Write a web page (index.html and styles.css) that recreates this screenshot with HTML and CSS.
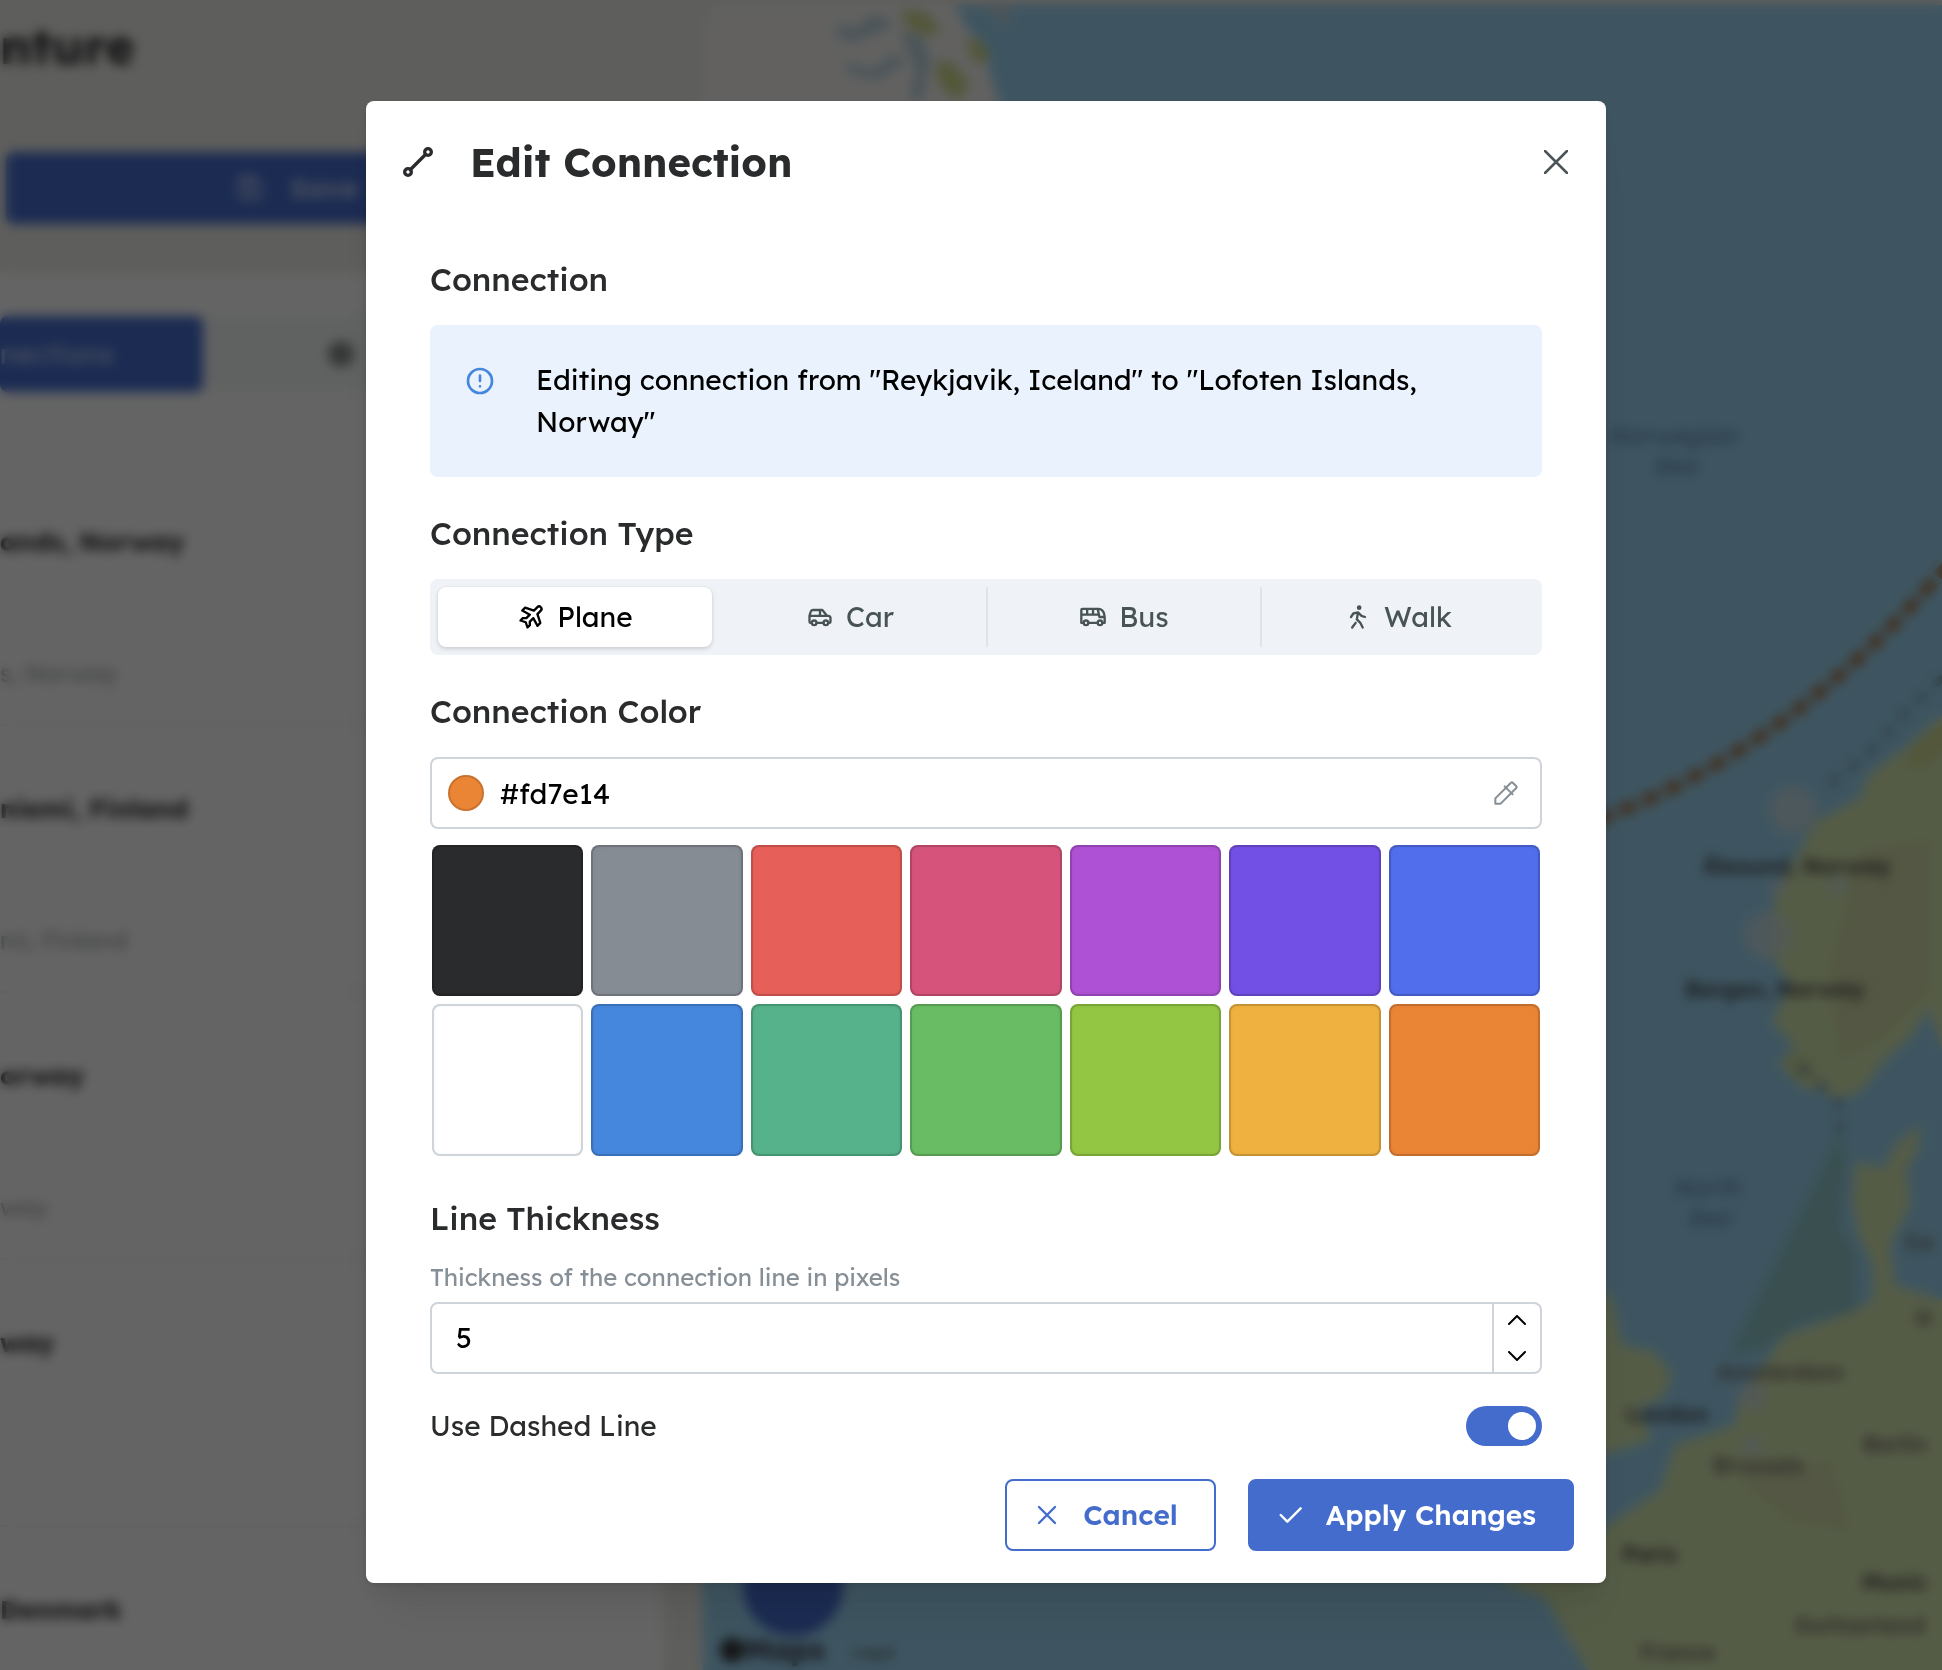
FILE: index.html
```html
<!DOCTYPE html>
<html lang="en">
<head>
<meta charset="utf-8">
<meta name="viewport" content="width=device-width, initial-scale=1">
<title>Edit Connection</title>
<link rel="stylesheet" href="styles.css">
</head>
<body>
<div class="app" aria-hidden="true">
  <div class="sidebar">
    <div class="trip-head">
      <div class="trip-title">nture</div>
      <div class="save-bar">
        <svg class="icon-32" viewBox="0 0 24 24"><path d="M6 4h10l4 4v10a2 2 0 0 1-2 2H6a2 2 0 0 1-2-2V6a2 2 0 0 1 2-2M14 4v4H8V4"/><circle cx="12" cy="14" r="2"/></svg>
        <span>Save</span>
      </div>
    </div>
    <div class="panel">
      <div class="tabs">
        <div class="tab tab-on">nections</div>
        <div class="tab"><span class="gear"></span></div>
      </div>
      <div class="stops">
        <div class="stop"><b>ands, Norway</b><span>s, Norway</span></div>
        <div class="stop"><b>niemi, Finland</b><span>mi, Finland</span></div>
        <div class="stop"><b>orway</b><span>way</span></div>
        <div class="stop"><b>way</b><span></span></div>
        <div class="stop"><b>Denmark</b></div>
      </div>
    </div>
  </div>
  <div class="map">
    <svg class="map-art" viewBox="703 5 1239 1665" preserveAspectRatio="xMinYMin slice">
      <defs>
        <pattern id="reserve" width="6" height="6" patternUnits="userSpaceOnUse"><rect width="6" height="6" fill="#92c2d2"/><circle cx="3" cy="3" r="1.5" fill="#7fd6a0"/></pattern>
      </defs>
      <rect x="703" y="5" width="1239" height="1665" fill="#9bd5f2"/>
      <path fill="#f4f3f1" d="M703 5H955L968 30L985 45L990 75L1002 110L900 130H703Z"/>
      <path fill="#b9d3de" d="M838 22L852 30L875 14L895 24L880 32L850 42L836 36ZM900 32L922 36L930 60L922 100H910L916 70ZM845 62L872 70L895 54L905 62L878 80L850 74ZM950 5L985 8L1010 30V5Z"/>
      <path fill="#cfd98c" d="M900 10L925 12L942 30L928 36L908 28ZM965 40L982 40L990 60L976 64ZM935 62L952 62L970 85L958 100L940 86Z"/>
      <g fill="#d4e6af">
        <path d="M1942 715L1905 748L1868 775L1860 798L1815 822L1800 850L1775 895L1768 950L1790 985L1772 1022L1796 1048L1778 1062L1800 1086L1838 1098L1860 1092L1885 1060L1912 1036L1928 1008L1942 1050Z"/>
        <path d="M1920 1125L1895 1145L1884 1168L1855 1162L1852 1200L1858 1235L1872 1262L1873 1300L1835 1318L1785 1335L1765 1362L1738 1400L1735 1425L1675 1445L1660 1490L1600 1530L1500 1583L1545 1598L1565 1632L1588 1670H1942V1300L1895 1285L1890 1245L1910 1205L1907 1168L1918 1150Z"/>
        <path d="M1590 1275L1612 1300L1622 1345L1655 1352L1672 1375L1662 1398L1638 1408L1652 1440L1590 1458Z"/>
      </g>
      <g fill="#cfd892"><path d="M1942 725L1915 742L1905 765L1925 768L1942 750ZM1785 1055L1810 1060L1815 1080L1795 1080Z"/></g>
      <path fill="#c9cba0" opacity=".5" d="M1860 850L1930 840V990L1880 1040L1840 1060L1830 970ZM1740 1480L1830 1460L1850 1530L1790 1520Z"/>
      <path fill="url(#reserve)" d="M1840 1132L1846 1160L1840 1225L1856 1256V1312L1800 1322L1765 1348L1728 1357Z"/>
      <g fill="#ccdde0" opacity=".75"><circle cx="1793" cy="810" r="24"/><circle cx="1768" cy="935" r="24"/><circle cx="1778" cy="888" r="9"/><circle cx="1838" cy="886" r="9"/><circle cx="1752" cy="1396" r="14"/><circle cx="1752" cy="1446" r="10"/></g>
      <path class="route" d="M1596 820Q1790 752 1950 562"/>
      <path class="track" d="M1832 782L1872 750L1906 712L1942 678M1840 1130V1105L1795 1060"/>
      <g class="sea-name"><text x="1608" y="444">Norwegian</text><text x="1652" y="474">Sea</text><text x="1672" y="1196">North</text><text x="1686" y="1226">Sea</text></g>
      <g class="place"><text x="1703" y="874">Ålesund, Norway</text><text x="1685" y="997">Bergen, Norway</text><text x="1626" y="1422">London</text><text x="1622" y="1562">Paris</text><text x="1862" y="1590">Munic</text></g>
      <g class="place faint"><text x="1717" y="1380">Amsterdam</text><text x="1713" y="1473">Brussels</text><text x="1863" y="1452">Berlin</text><text x="1795" y="1633">Switzerland</text><text x="1640" y="1660">France</text><text x="1905" y="1250">Co</text><text x="1915" y="1326">H</text></g>
      <circle cx="793" cy="1586" r="50" fill="#446ccd"/>
      <circle cx="732" cy="1650" r="12" fill="#333"/>
      <text x="744" y="1660" class="brand">Maps</text>
      <text x="852" y="1658" class="legal">Legal</text>
    </svg>
  </div>
</div>

<div class="overlay">
  <form class="modal" role="dialog" aria-modal="true" aria-labelledby="dialog-title">
    <header class="modal-head">
      <svg class="icon-40" viewBox="0 0 24 24"><circle cx="6" cy="18" r="2"/><circle cx="18" cy="6" r="2"/><path d="M7.500 16.500l9-9"/></svg>
      <h1 class="modal-title" id="dialog-title">Edit Connection</h1>
      <button class="close" type="button" aria-label="Close"><svg class="icon-24" viewBox="0 0 24 24"><path d="M1 1l22 22M23 1L1 23"/></svg></button>
    </header>

    <div class="modal-body">
      <section>
        <h2 class="label">Connection</h2>
        <div class="alert">
          <svg class="icon-32" viewBox="0 0 24 24"><circle cx="12" cy="12" r="9"/><path d="M12 8v4M12 16h.01"/></svg>
          <p>Editing connection from "Reykjavik, Iceland" to "Lofoten Islands, Norway"</p>
        </div>
      </section>

      <fieldset class="field">
        <legend class="label">Connection Type</legend>
        <div class="segments">
          <label class="segment"><input type="radio" name="type" checked>
            <svg class="icon-28" viewBox="0 0 24 24"><path d="M14.500 6.500l3-2.900a2.050 2.050 0 0 1 2.900 2.900l-2.900 3l2.500 7.500l-2.500 2.550l-3.500-6.550l-3 3v3l-2 2l-1.500-4.500l-4.500-1.500l2-2h3l3-3l-6.500-3.500l2.500-2.500z"/></svg>Plane</label>
          <label class="segment"><input type="radio" name="type">
            <svg class="icon-28" viewBox="0 0 24 24"><circle cx="7" cy="17" r="2"/><circle cx="17" cy="17" r="2"/><path d="M5 17H4a1 1 0 0 1-1-1v-5l1-3.500A2 2 0 0 1 6 6h8l4 5h1a2 2 0 0 1 2 2v3a1 1 0 0 1-1 1h-1M15 17H9M3 11h15M12 11V6"/></svg>Car</label>
          <label class="segment"><input type="radio" name="type">
            <svg class="icon-28" viewBox="0 0 24 24"><circle cx="6" cy="17" r="2"/><circle cx="18" cy="17" r="2"/><path d="M4 17H2V6a1 1 0 0 1 1-1h14a5 7 0 0 1 5 7v5h-2M16 17H8M16 5l1.500 7H22M2 10h15M7 5v5M12 5v5"/></svg>Bus</label>
          <label class="segment"><input type="radio" name="type">
            <svg class="icon-28" viewBox="0 0 24 24"><circle cx="13" cy="4" r="1"/><path d="M7 21l3-4M16 21l-2-4l-3-3l1-6M6 12l2-3l4-1l3 3l3 1"/></svg>Walk</label>
        </div>
      </fieldset>

      <section>
        <label class="label" for="color">Connection Color</label>
        <div class="input-box">
          <span class="color-dot"></span>
          <input id="color" class="text-input" type="text" value="#fd7e14">
          <button class="picker" type="button" aria-label="Pick a color"><svg class="icon-32" viewBox="0 0 24 24"><path d="M11 7l6 6M4 16L15.700 4.300a1 1 0 0 1 1.400 0l2.600 2.600a1 1 0 0 1 0 1.400L8 20H4z"/></svg></button>
        </div>
        <div class="swatches">
          <button type="button" class="swatch c-dark" aria-label="Dark"></button>
          <button type="button" class="swatch c-gray" aria-label="Gray"></button>
          <button type="button" class="swatch c-red" aria-label="Red"></button>
          <button type="button" class="swatch c-pink" aria-label="Pink"></button>
          <button type="button" class="swatch c-grape" aria-label="Grape"></button>
          <button type="button" class="swatch c-violet" aria-label="Violet"></button>
          <button type="button" class="swatch c-indigo" aria-label="Indigo"></button>
          <button type="button" class="swatch c-white" aria-label="White"></button>
          <button type="button" class="swatch c-blue" aria-label="Blue"></button>
          <button type="button" class="swatch c-teal" aria-label="Teal"></button>
          <button type="button" class="swatch c-green" aria-label="Green"></button>
          <button type="button" class="swatch c-lime" aria-label="Lime"></button>
          <button type="button" class="swatch c-yellow" aria-label="Yellow"></button>
          <button type="button" class="swatch c-orange" aria-label="Orange"></button>
        </div>
      </section>

      <section>
        <label class="label label-tight" for="thickness">Line Thickness</label>
        <p class="hint" id="thickness-hint">Thickness of the connection line in pixels</p>
        <div class="input-box number-box">
          <input id="thickness" class="text-input" type="number" value="5" aria-describedby="thickness-hint">
          <div class="stepper">
            <button type="button" aria-label="Increase"><svg class="chevron" viewBox="0 0 18 10"><path d="M1 9l8-8l8 8"/></svg></button>
            <button type="button" aria-label="Decrease"><svg class="chevron" viewBox="0 0 18 10"><path d="M1 1l8 8l8-8"/></svg></button>
          </div>
        </div>
      </section>

      <div class="switch-row">
        <label for="dashed">Use Dashed Line</label>
        <input id="dashed" class="switch" type="checkbox" role="switch" checked>
      </div>
    </div>

    <footer class="modal-foot">
      <button class="btn btn-outline" type="button"><svg class="icon-32" viewBox="0 0 24 24"><path d="M18 6L6 18M6 6l12 12"/></svg>Cancel</button>
      <button class="btn btn-filled" type="submit"><svg class="icon-32" viewBox="0 0 24 24"><path d="M5 12l5 5L20 7"/></svg>Apply Changes</button>
    </footer>
  </form>
</div>
</body>
</html>
```
FILE: styles.css
```css
* { box-sizing: border-box; }

:root {
  --blue: #446ccd;
  --border: #ced4da;
  --text: #2a2b2d;
}

body {
  margin: 0;
  background: #ebebe6;
  color: var(--text);
  font-family: Lexend, Inter, "Open Sans", sans-serif;
  font-size: 28px;
  line-height: 42px;
}

h1, h2, p { margin: 0; }

button, input { font: inherit; color: inherit; }

button {
  border: 0;
  padding: 0;
  background: none;
  cursor: pointer;
}

svg {
  display: block;
  flex: none;
  fill: none;
  stroke: currentColor;
  stroke-width: 2;
  stroke-linecap: round;
  stroke-linejoin: round;
}

.icon-24 { width: 24px; height: 24px; }
.icon-28 { width: 28px; height: 28px; }
.icon-32 { width: 32px; height: 32px; }
.icon-40 { width: 40px; height: 40px; }

/* Trip page behind the dialog */
.app {
  position: fixed;
  inset: 0;
  display: flex;
  overflow: hidden;
  white-space: nowrap;
}

.sidebar {
  flex: none;
  width: 703px;
  display: flex;
  flex-direction: column;
}

.trip-head {
  flex: none;
  height: 273px;
  padding: 20px 40px 0 0;
}

.trip-title {
  font-size: 50px;
  line-height: 52px;
  font-weight: 700;
}

.save-bar {
  display: flex;
  align-items: center;
  gap: 24px;
  height: 72px;
  margin: 80px 0 0 6px;
  padding-left: 228px;
  border-radius: 8px;
  background: var(--blue);
  color: #c5d2f0;
  font-weight: 600;
}

.panel {
  flex: 1;
  margin-right: 39px;
  background: #fbfbfb;
}

.tabs {
  display: flex;
  margin-top: 43px;
  background: #f1f4f4;
}

.tab {
  display: flex;
  align-items: center;
  width: 203px;
  height: 76px;
  padding-left: 125px;
}

.tab-on {
  padding-left: 0;
  border-radius: 8px;
  background: var(--blue);
  color: #c5d2f0;
}

.gear {
  width: 26px;
  height: 26px;
  border-radius: 50%;
  background: #858a88;
}

.stops { padding-top: 67px; }

.stop {
  display: flex;
  flex-direction: column;
  gap: 89px;
  height: 267px;
  padding-top: 62px;
  border-bottom: 2px solid #e6e8e8;
  font-size: 26px;
}

.stop span {
  color: #9a9ea0;
  font-size: 24px;
}

.map {
  flex: 1;
  min-width: 0;
  margin-top: 5px;
  border-radius: 24px 0 0 0;
  overflow: hidden;
}

.map-art {
  width: 100%;
  height: 100%;
  stroke: none;
}

.route {
  stroke: #a87a50;
  stroke-width: 12;
  stroke-linecap: butt;
  stroke-dasharray: 18 7;
}

.track {
  stroke: #7fa3b5;
  stroke-width: 8;
  stroke-dasharray: 6 18;
}

.place {
  fill: #4a4648;
  font-size: 22px;
  font-weight: 600;
}

.faint { fill: #77706c; }

.sea-name {
  fill: #5f7fa6;
  font-size: 24px;
  font-style: italic;
}

.brand {
  fill: #3c3c50;
  font-size: 30px;
  font-weight: 700;
}

.legal {
  fill: #555;
  font-size: 16px;
}

/* Dialog */
.overlay {
  position: relative;
  display: flex;
  justify-content: center;
  align-items: flex-start;
  min-height: 100vh;
  padding: 101px 24px 88px 54px;
  background: rgba(0, 0, 0, .6);
  backdrop-filter: blur(6px);
}

.modal {
  display: flow-root;
  width: 100%;
  max-width: 1240px;
  border-radius: 8px;
  background: #fff;
  box-shadow: 0 2px 6px rgba(0, 0, 0, .1), 0 40px 50px -10px rgba(0, 0, 0, .08), 0 14px 24px rgba(0, 0, 0, .06);
}

.modal-head {
  display: flex;
  align-items: center;
  gap: 32px;
  height: 122px;
  padding: 0 38px 0 32px;
}

.modal-title {
  flex: 1;
  font-size: 40px;
  line-height: 52px;
  font-weight: 700;
}

.close { color: #495557; }
.close svg { stroke-width: 2.5; }

.modal-body {
  display: flex;
  flex-direction: column;
  gap: 32px;
  padding: 32px 64px 33px;
}

.label {
  display: block;
  padding: 0;
  margin-bottom: 22px;
  font-size: 32px;
  line-height: 48px;
  font-weight: 500;
}

.label-tight { margin-bottom: 17px; }

.field {
  min-width: 0;
  margin: 0;
  padding: 0;
  border: 0;
}

.alert {
  display: flex;
  gap: 40px;
  padding: 34px 80px 34px 34px;
  border-radius: 8px;
  background: #eaf2fd;
  color: #000;
}

.alert svg {
  margin-top: 6px;
  color: #4587dd;
}

.segments {
  display: grid;
  grid-template-columns: repeat(4, 1fr);
  padding: 8px;
  border-radius: 8px;
  background: #eff3f7;
}

.segment {
  display: flex;
  justify-content: center;
  align-items: center;
  gap: 12px;
  height: 60px;
  border-left: 2px solid #dfe4e8;
  color: #475354;
  cursor: pointer;
}

.segment input {
  position: absolute;
  opacity: 0;
}

.segment:first-child,
.segment:has(:checked),
.segment:has(:checked) + .segment { border-color: transparent; }

.segment:has(:checked) {
  border: 0;
  border-radius: 8px;
  background: #fff;
  color: #000;
  box-shadow: 0 2px 4px rgba(0, 0, 0, .14), 0 0 2px rgba(0, 0, 0, .08);
}

.input-box {
  display: flex;
  align-items: center;
  height: 72px;
  border: 2px solid var(--border);
  border-radius: 8px;
  background: #fff;
  color: #000;
}

.color-dot {
  flex: none;
  width: 36px;
  height: 36px;
  margin: 0 16px;
  border-radius: 50%;
  background: #eb8536;
  box-shadow: inset 0 0 0 2px rgba(0, 0, 0, .14);
}

.text-input {
  flex: 1;
  min-width: 0;
  height: 100%;
  padding: 0;
  border: 0;
  outline: 0;
  background: none;
}

.picker {
  margin-right: 18px;
  color: #868e96;
}

.picker svg { stroke-width: 1.5; }

.swatches {
  display: grid;
  grid-template-columns: repeat(7, 1fr);
  gap: 8px;
  padding: 16px 2px 6px;
}

.swatch {
  aspect-ratio: 1;
  border-radius: 8px;
  box-shadow: inset 0 0 0 2px rgba(0, 0, 0, .14), inset 0 0 5px rgba(0, 0, 0, .1);
}

.c-dark { background: #2a2b2d; }
.c-gray { background: #868c94; }
.c-red { background: #e75f59; }
.c-pink { background: #d6547b; }
.c-grape { background: #ae51d4; }
.c-violet { background: #7350e5; }
.c-indigo { background: #516eec; }
.c-white {
  background: #fff;
  box-shadow: inset 0 0 0 2px var(--border), inset 0 0 5px rgba(0, 0, 0, .1);
}
.c-blue { background: #4587dd; }
.c-teal { background: #55b28a; }
.c-green { background: #69bc63; }
.c-lime { background: #93c643; }
.c-yellow { background: #efb13f; }
.c-orange { background: #eb8536; }

.hint {
  margin-bottom: 7px;
  color: #868e96;
  font-size: 24px;
  line-height: 36px;
}

.number-box { padding-left: 24px; }

.number-box input {
  appearance: textfield;
  -moz-appearance: textfield;
}

.number-box input::-webkit-inner-spin-button { appearance: none; }

.stepper {
  display: flex;
  flex-direction: column;
  gap: 4px;
  width: 48px;
  height: 100%;
  border-left: 2px solid var(--border);
}

.stepper button {
  flex: 1;
  display: grid;
  place-items: center;
}

.chevron {
  width: 18px;
  height: 10px;
}

.switch-row {
  display: flex;
  justify-content: space-between;
  align-items: center;
  height: 40px;
}

.switch {
  appearance: none;
  width: 76px;
  height: 40px;
  margin: 0;
  padding: 6px;
  border-radius: 20px;
  background: #ced4da;
  cursor: pointer;
}

.switch::before {
  content: "";
  display: block;
  width: 28px;
  height: 28px;
  border-radius: 50%;
  background: #fff;
}

.switch:checked { background: var(--blue); }
.switch:checked::before { margin-left: auto; }

.modal-foot {
  display: flex;
  justify-content: flex-end;
  gap: 32px;
  padding: 0 32px;
  margin-bottom: 32px;
}

.btn {
  display: flex;
  align-items: center;
  gap: 20px;
  height: 72px;
  padding: 0 36px 0 24px;
  border: 2px solid var(--blue);
  border-radius: 8px;
  font-weight: 600;
}

.btn svg { stroke-width: 1.8; }

.btn-outline {
  background: #fff;
  color: var(--blue);
}

.btn-filled {
  background: var(--blue);
  color: #fff;
}
```
